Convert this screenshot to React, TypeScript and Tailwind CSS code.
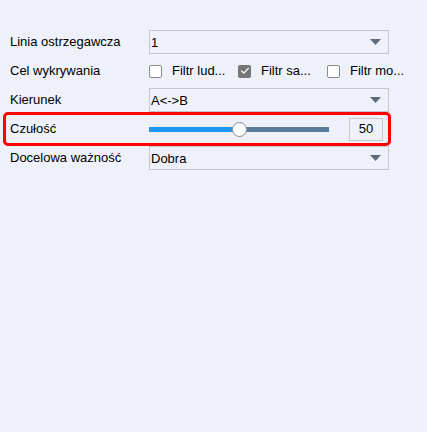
import { Check } from 'lucide-react';

const font = { fontFamily: '"Liberation Sans", "Noto Sans", sans-serif' };

function Arrow() {
  return (
    <svg width="11" height="6" viewBox="0 0 11 6" className="mr-[7px] shrink-0">
      <path d="M0 0 H11 L5.5 6 Z" fill="#5f6b7a" />
    </svg>
  );
}

function Select({ value }: { value: string }) {
  return (
    <div className="flex h-[24px] w-[240px] items-center justify-between border border-[#c4c6cc] pl-[1px]">
      <span className="text-[13px] leading-none text-black">{value}</span>
      <Arrow />
    </div>
  );
}

function Box({ label, checked }: { label: string; checked?: boolean }) {
  return (
    <div className="flex w-[89px] shrink-0 items-center gap-[10px]">
      {checked ? (
        <div className="flex h-[13px] w-[13px] items-center justify-center rounded-[2px] bg-[#777]">
          <Check size={10} strokeWidth={3} className="text-white" />
        </div>
      ) : (
        <div className="h-[13px] w-[13px] rounded-[2px] border border-[#8a8a8a] bg-white" />
      )}
      <span className="whitespace-nowrap text-[13px] text-black">{label}</span>
    </div>
  );
}

function Row({ label, children }: { label: string; children: React.ReactNode }) {
  return (
    <div className="flex h-[24px] items-center">
      <div className="w-[139px] shrink-0 text-[13px] text-black">{label}</div>
      {children}
    </div>
  );
}

export default function App() {
  return (
    <div className="h-[432px] w-[427px] bg-[#eef1f9] pl-[10px] pt-[30px]" style={font}>
      <div className="flex flex-col gap-[5px]">
        <Row label="Linia ostrzegawcza">
          <Select value="1" />
        </Row>
        <Row label="Cel wykrywania">
          <Box label="Filtr lud..." />
          <Box label="Filtr sa..." checked />
          <Box label="Filtr mo..." />
        </Row>
        <Row label="Kierunek">
          <Select value="A<->B" />
        </Row>
        <div className="relative">
          {/* highlight frame */}
          <div className="absolute left-[-7px] top-[-5px] h-[34px] w-[388px] rounded-[5px] border-[3px] border-[#ff0000]" />
          <Row label="Czułość">
            <div className="relative flex h-[24px] w-[180px] items-center">
              <div className="h-[5px] w-[90px] bg-[#2196f0]" />
              <div className="h-[5px] w-[90px] bg-[#5b7c9c]" />
              <div className="absolute left-[83px] top-[5px] h-[15px] w-[15px] rounded-full border border-[#8a8a8a] bg-white" />
            </div>
            <div className="ml-[20px] flex h-[23px] w-[34px] items-center justify-center border border-[#c8c8cc] text-[13px] text-black">
              50
            </div>
          </Row>
        </div>
        <Row label="Docelowa ważność">
          <Select value="Dobra" />
        </Row>
      </div>
    </div>
  );
}
